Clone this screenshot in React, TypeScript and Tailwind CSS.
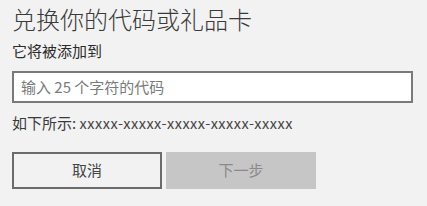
/* Redeem code dialog */

const cjk = '"Noto Sans CJK SC", "Noto Sans", sans-serif';

export default function App() {
  return (
    <div
      className="w-[427px] h-[206px] bg-[#f2f2f2] pl-3 pt-[3px]"
      style={{ fontFamily: cjk }}
    >
      <h1 className="text-[24px] leading-[32px] font-light text-[#3a3a3a]">
        兑换你的代码或礼品卡
      </h1>
      <p className="mt-[6px] text-[15px] leading-[20px] text-[#2b2b2b]">它将被添加到</p>

      <div className="mt-[10px] w-[401px] h-[32px] border-2 border-[#7a7a7a] bg-white flex items-center px-[7px]">
        <span className="text-[15px] text-[#7a7a7a]">输入 25 个字符的代码</span>
      </div>

      <p className="mt-[10px] text-[15px] leading-[20px] text-[#3a3a3a]">
        如下所示: <span className="text-[14.5px] tracking-[0.5px] text-[#444]">xxxxx-xxxxx-xxxxx-xxxxx-xxxxx</span>
      </p>

      <div className="mt-[19px] flex gap-1">
        <button className="w-[150px] h-[37px] border-2 border-[#6b6b6b] bg-[#f2f2f2] text-[15px] text-[#444]">
          取消
        </button>
        <button className="w-[150px] h-[37px] bg-[#c6c6c6] text-[15px] text-[#8a8a8a]" disabled>
          下一步
        </button>
      </div>
    </div>
  );
}
